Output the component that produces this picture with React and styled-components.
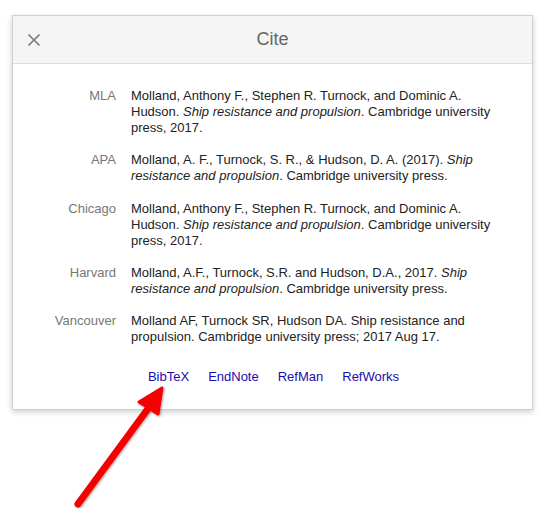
import React from "react";
import styled, { createGlobalStyle } from "styled-components";

const GlobalStyle = createGlobalStyle`
  html, body {
    margin: 0;
    padding: 0;
    background: #fff;
  }
  body {
    font-family: "Liberation Sans", Arial, sans-serif;
  }
`;

const Page = styled.div`
  position: relative;
  width: 546px;
  height: 508px;
  padding: 15px 12px 0;
  box-sizing: border-box;
  overflow: hidden;
`;

const Dialog = styled.div`
  width: 521px;
  background: #fff;
  border: 1px solid #d0d0d0;
  box-sizing: border-box;
  box-shadow: 0 2px 6px rgba(0, 0, 0, 0.2);
`;

const Header = styled.div`
  position: relative;
  height: 47px;
  display: flex;
  align-items: center;
  justify-content: center;
  background: #f5f5f5;
  border-bottom: 1px solid #dcdcdc;
`;

const CloseButton = styled.button`
  position: absolute;
  left: 12px;
  top: 15px;
  width: 18px;
  height: 18px;
  padding: 0;
  border: 0;
  background: none;
  display: flex;
  align-items: center;
  justify-content: center;
  cursor: pointer;
`;

const Title = styled.h2`
  margin: 0;
  font-size: 18px;
  font-weight: normal;
  color: #666;
`;

const Body = styled.div`
  padding: 24px 24px 24px 0;
`;

const Row = styled.div`
  display: grid;
  grid-template-columns: 103px 1fr;
  column-gap: 15px;
  margin-bottom: ${(p) => (p.$wide ? 17 : 16)}px;
  font-size: 13px;
  line-height: 16px;
`;

const Label = styled.div`
  text-align: right;
  color: #777;
`;

const Citation = styled.div`
  color: #222;
  max-width: 378px;
`;

const Links = styled.div`
  display: flex;
  justify-content: center;
  gap: 19px;
  margin-top: 24px;
  padding-left: 26px;
  font-size: 13px;
  line-height: 16px;
`;

const Link = styled.a`
  color: #1a0dab;
  text-decoration: none;
  cursor: pointer;
`;

const Arrow = styled.svg`
  position: absolute;
  left: 0;
  top: 0;
  pointer-events: none;
`;

const citations = [
  {
    label: "MLA",
    text: (
      <>
        Molland, Anthony F., Stephen R. Turnock, and Dominic A. Hudson.{" "}
        <i>Ship resistance and propulsion</i>. Cambridge university press, 2017.
      </>
    ),
  },
  {
    label: "APA",
    wide: true,
    text: (
      <>
        Molland, A. F., Turnock, S. R., &amp; Hudson, D. A. (2017).{" "}
        <i>Ship resistance and propulsion</i>. Cambridge university press.
      </>
    ),
  },
  {
    label: "Chicago",
    text: (
      <>
        Molland, Anthony F., Stephen R. Turnock, and Dominic A. Hudson.{" "}
        <i>Ship resistance and propulsion</i>. Cambridge university press, 2017.
      </>
    ),
  },
  {
    label: "Harvard",
    text: (
      <>
        Molland, A.F., Turnock, S.R. and Hudson, D.A., 2017.{" "}
        <i>Ship resistance and propulsion</i>. Cambridge university press.
      </>
    ),
  },
  {
    label: "Vancouver",
    text: (
      <>
        Molland AF, Turnock SR, Hudson DA. Ship resistance and propulsion.
        Cambridge university press; 2017 Aug 17.
      </>
    ),
  },
];

const exports = ["BibTeX", "EndNote", "RefMan", "RefWorks"];

export default function App() {
  return (
    <>
      <GlobalStyle />
      <Page>
        <Dialog>
          <Header>
            <CloseButton aria-label="Close">
              <svg width="14" height="14" viewBox="0 0 14 14">
                <path
                  d="M1.5 1.5 L12.5 12.5 M12.5 1.5 L1.5 12.5"
                  stroke="#777"
                  strokeWidth="1.6"
                  fill="none"
                />
              </svg>
            </CloseButton>
            <Title>Cite</Title>
          </Header>
          <Body>
            {citations.map((c) => (
              <Row key={c.label} $wide={c.wide}>
                <Label>{c.label}</Label>
                <Citation>{c.text}</Citation>
              </Row>
            ))}
            <Links>
              {exports.map((e) => (
                <Link key={e}>{e}</Link>
              ))}
            </Links>
          </Body>
        </Dialog>

        {/* red annotation arrow pointing at BibTeX */}
        <Arrow width="546" height="508" viewBox="0 0 546 508">
          <defs>
            <filter id="sh" x="-20%" y="-20%" width="140%" height="140%">
              <feDropShadow dx="1" dy="1" stdDeviation="1" floodColor="#000" floodOpacity="0.35" />
            </filter>
          </defs>
          <g filter="url(#sh)">
            <line x1="78" y1="504" x2="150" y2="406" stroke="#f50000" strokeWidth="7" strokeLinecap="round" />
            <polygon points="162,388 139,402 158,414" fill="#f50000" stroke="#f50000" strokeWidth="3" strokeLinejoin="round" />
          </g>
        </Arrow>
      </Page>
    </>
  );
}
